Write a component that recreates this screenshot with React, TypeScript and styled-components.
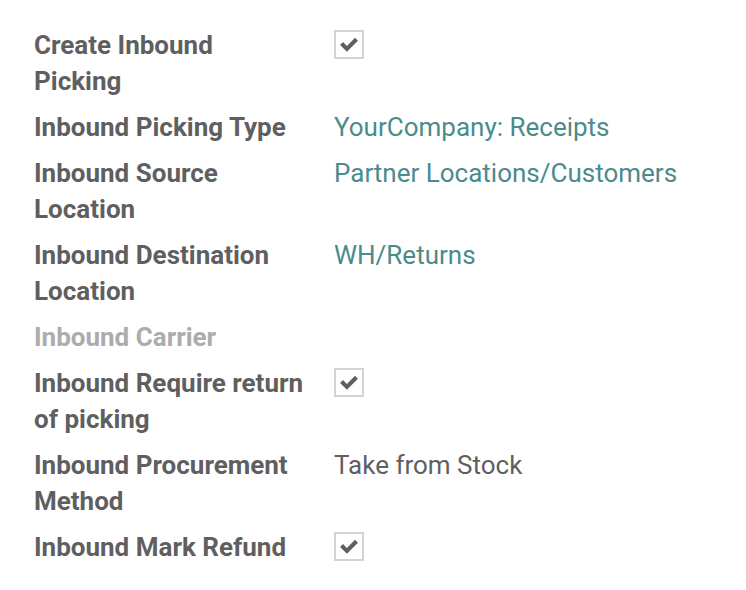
import React from "react";
import styled, { createGlobalStyle } from "styled-components";

const GlobalStyle = createGlobalStyle`
	html, body {
		margin: 0;
		padding: 0;
		background: #ffffff;
	}
	body {
		font-family: Roboto, "Noto Sans", sans-serif;
	}
`;

type FieldValue =
	| { kind: "check" }
	| { kind: "link"; text: string }
	| { kind: "text"; text: string }
	| { kind: "empty" };

interface Field {
	label: string;
	muted?: boolean;
	value: FieldValue;
}

const fields: Field[] = [
	{ label: "Create Inbound Picking", value: { kind: "check" } },
	{ label: "Inbound Picking Type", value: { kind: "link", text: "YourCompany: Receipts" } },
	{ label: "Inbound Source Location", value: { kind: "link", text: "Partner Locations/Customers" } },
	{ label: "Inbound Destination Location", value: { kind: "link", text: "WH/Returns" } },
	{ label: "Inbound Carrier", muted: true, value: { kind: "empty" } },
	{ label: "Inbound Require return of picking", value: { kind: "check" } },
	{ label: "Inbound Procurement Method", value: { kind: "text", text: "Take from Stock" } },
	{ label: "Inbound Mark Refund", value: { kind: "check" } },
];

const CheckIcon = () => (
	<svg width="20" height="17" viewBox="0 0 19 16">
		<path d="M1 8.5 L3.8 5.7 L7.5 9.4 L15.2 1.7 L18 4.5 L7.5 15 Z" fill="#5f5f5f" />
	</svg>
);

export default function App() {
	return (
		<>
			<GlobalStyle />
			<FormGroup>
				{fields.map((f) => (
					<Row key={f.label}>
						<Label muted={f.muted}>{f.label}</Label>
						<Value>
							{f.value.kind === "check" && (
								<CheckBox>
									<CheckIcon />
								</CheckBox>
							)}
							{f.value.kind === "link" && <LinkText>{f.value.text}</LinkText>}
							{f.value.kind === "text" && <PlainText>{f.value.text}</PlainText>}
						</Value>
					</Row>
				))}
			</FormGroup>
		</>
	);
}

// style 영역
const FormGroup = styled.div`
	display: flex;
	flex-direction: column;
	gap: 10px;
	padding: 27px 0 0 34px;
`;

const Row = styled.div`
	display: grid;
	grid-template-columns: 300px 1fr;
	align-items: start;
`;

const Label = styled.div<{ muted?: boolean }>`
	font-size: 26px;
	line-height: 36px;
	font-weight: 700;
	color: ${(p) => (p.muted ? "#acacac" : "#5f5f5f")};
	padding-right: 30px;
`;

const Value = styled.div`
	font-size: 26px;
	line-height: 36px;
	min-height: 36px;
`;

const CheckBox = styled.div`
	box-sizing: border-box;
	width: 30px;
	height: 29px;
	margin-top: 3px;
	border: 2px solid #d4d4d4;
	display: flex;
	align-items: center;
	justify-content: center;
`;

const LinkText = styled.span`
	color: #4b8b8b;
`;

const PlainText = styled.span`
	color: #5f5f5f;
`;
